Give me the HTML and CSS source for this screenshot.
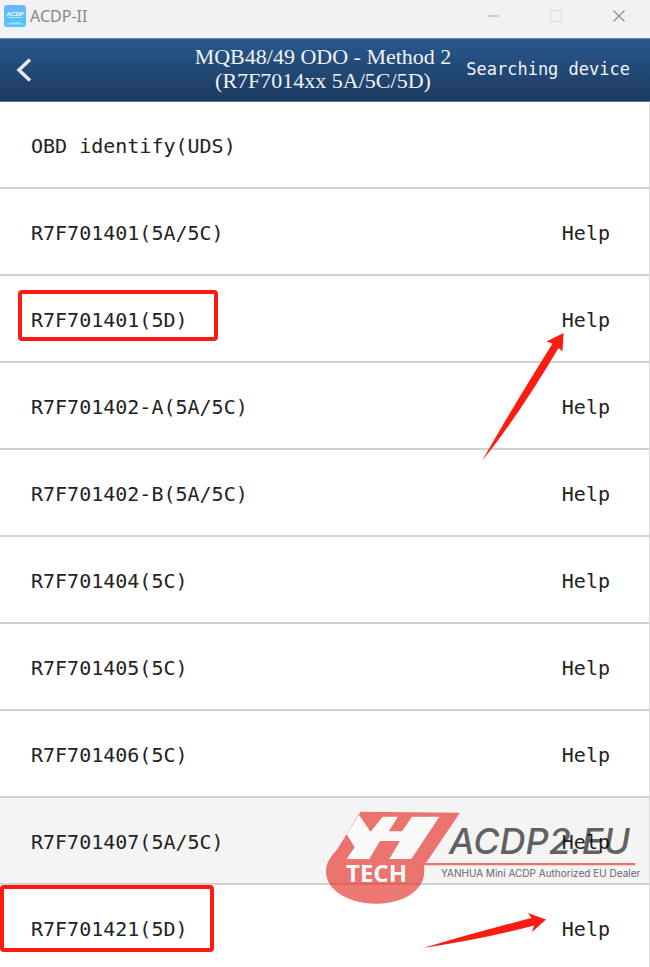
FILE: index.html
```html
<!DOCTYPE html>
<html lang="en">
<head>
    <meta charset="UTF-8">
    <meta name="viewport" content="width=device-width, initial-scale=1.0">
    <title>ACDP-II</title>
    <link rel="stylesheet" href="styles.css">
</head>
<body>
    <div class="titlebar">
      <svg class="app-icon" width="22" height="22" viewBox="0 0 22 22" aria-hidden="true">
        <defs>
          <linearGradient id="appBlue" x1="0" y1="0" x2="0" y2="1">
            <stop offset="0" stop-color="#6cb8fb"/>
            <stop offset="1" stop-color="#4cc6fb"/>
          </linearGradient>
        </defs>
        <rect width="22" height="22" rx="3" fill="url(#appBlue)"/>
        <text x="11" y="11" class="app-icon-text">ACDP</text>
        <path d="M4 12.5h14" stroke="#fff" stroke-width="0.7" opacity="0.8"/>
        <path d="M2 19.500q1-2 4-1.500q2-1.500 5-.5q4-1 5 .5q3-.5 4 1.500z" fill="#9fdcfd"/>
      </svg>
      <span class="app-name">ACDP-II</span>
      <div class="window-buttons">
        <button type="button" aria-label="Minimize">
          <svg width="14" height="14" viewBox="0 0 14 14"><path d="M1 7h12" stroke="#a8a8a8"/></svg>
        </button>
        <button type="button" aria-label="Maximize" disabled>
          <svg width="14" height="14" viewBox="0 0 14 14"><rect x="1.500" y="1.500" width="11" height="11" fill="none" stroke="#dcdcdc"/></svg>
        </button>
        <button type="button" aria-label="Close">
          <svg width="14" height="14" viewBox="0 0 14 14"><path d="M1.500 1.500l11 11M12.500 1.500l-11 11" stroke="#8c8c8c" stroke-width="1.200"/></svg>
        </button>
      </div>
    </div>

    <header class="header">
      <button type="button" class="back" aria-label="Back">
        <svg width="16" height="24" viewBox="0 0 16 24"><path d="M14 1.500L3 12l11 10.500" fill="none" stroke="#e6e8ec" stroke-width="3.500"/></svg>
      </button>
      <h1>MQB48/49 ODO - Method 2<br>(R7F7014xx 5A/5C/5D)</h1>
      <span class="status">Searching device</span>
    </header>

    <ul class="menu">
      <li><button type="button" class="item">OBD identify(UDS)</button></li>
      <li><button type="button" class="item">R7F701401(5A/5C)</button><a href="#" class="help">Help</a></li>
      <li>
        <button type="button" class="item">R7F701401(5D)</button><a href="#" class="help">Help</a>
        <span class="mark"></span>
        <svg class="arrow arrow-up" width="84" height="130" viewBox="0 0 84 130" aria-hidden="true">
          <path d="M82.500 1L65.500 9.500L71.500 11.500Q30 78 1 129Q38 83 77.500 16L81.500 19.500Z"/>
        </svg>
      </li>
      <li><button type="button" class="item">R7F701402-A(5A/5C)</button><a href="#" class="help">Help</a></li>
      <li><button type="button" class="item">R7F701402-B(5A/5C)</button><a href="#" class="help">Help</a></li>
      <li><button type="button" class="item">R7F701404(5C)</button><a href="#" class="help">Help</a></li>
      <li><button type="button" class="item">R7F701405(5C)</button><a href="#" class="help">Help</a></li>
      <li><button type="button" class="item">R7F701406(5C)</button><a href="#" class="help">Help</a></li>
      <li class="selected">
        <button type="button" class="item">R7F701407(5A/5C)</button><a href="#" class="help">Help</a>
        <svg class="brand" width="320" height="105" viewBox="0 0 320 105">
          <g transform="scale(0.3333)">
            <path class="brand-red" d="M122 20L420 23L318 174H946V181H311Q315 195 311 215C300 265 240 296 165 296C85 296 18 255 18 200C18 170 35 152 50 135L80 88L113 34Z"/>
            <path class="brand-white" d="M80 88L117 30L152 80L188 35H234L206 79H246L276 35H358L274 162H208L240 108H180L148 162H80L104 127Z"/>
          </g>
          <text x="26" y="77" class="brand-tech">TECH</text>
          <text x="129" y="49" class="brand-name">ACDP2.EU</text>
          <text x="121" y="72" class="brand-line">YANHUA Mini ACDP Authorized EU Dealer</text>
        </svg>
      </li>
      <li>
        <button type="button" class="item">R7F701421(5D)</button><a href="#" class="help">Help</a>
        <span class="mark mark-wide"></span>
        <svg class="arrow arrow-right" width="125" height="38" viewBox="0 0 125 38" aria-hidden="true">
          <path d="M124 7.500L106 1L109.500 6Q55 20 1 36Q62 27 112 13.500L110 20Z"/>
        </svg>
      </li>
    </ul>
</body>
</html>
```
FILE: styles.css
```css
* {
    box-sizing: border-box;
    margin: 0;
    padding: 0;
}

body {
    font-family: "DejaVu Sans Mono", monospace;
    background: #fff;
    color: #222;
    min-height: 100vh;
    overflow: hidden;
}

button {
    background: none;
    border: none;
    font: inherit;
    color: inherit;
    cursor: pointer;
}

/* window title bar */
.titlebar {
    display: flex;
    align-items: center;
    height: 38px;
    padding: 0 24px 6px 4px;
    background: #f2f2f2;
}

.app-icon-text {
    font: italic bold 6px "Liberation Sans", sans-serif;
    text-anchor: middle;
    fill: #fff;
}

.app-name {
    margin-left: 4px;
    font-family: "Noto Sans", sans-serif;
    font-size: 16px;
    color: #888;
}

.window-buttons {
    display: flex;
    gap: 49px;
    margin-left: auto;
}

.window-buttons button,
.window-buttons svg {
    display: block;
}

/* blue header */
.header {
    display: grid;
    grid-template-columns: 1fr auto 1fr;
    align-items: center;
    height: 64px;
    padding: 0 20px 0 16px;
    background: linear-gradient(#28588c, #1c3a60);
    border-top: 1px solid #6d87a3;
    border-bottom: 1px solid #5b7390;
    color: #f0f2f5;
}

.back {
    justify-self: start;
    height: 24px;
}

.header h1 {
    font-family: "Liberation Serif", serif;
    font-size: 22px;
    font-weight: normal;
    line-height: 24px;
    padding-bottom: 2px;
    text-align: center;
}

.status {
    justify-self: end;
    padding-bottom: 2px;
    font-size: 17px;
    white-space: nowrap;
}

/* list */
.menu {
    list-style: none;
    border-right: 1px solid #dcdcdc;
}

.menu li {
    position: relative;
    display: flex;
    align-items: center;
    justify-content: space-between;
    height: 87px;
    padding: 2px 39px 0 31px;
    border-bottom: 2px solid #d0d0d0;
    font-size: 20px;
}

.menu .selected {
    background: #f4f4f4;
}

.help {
    color: inherit;
    text-decoration: none;
}

/* red annotations */
.mark {
    position: absolute;
    left: 18px;
    top: 14px;
    width: 200px;
    height: 51px;
    border: 4px solid #fe1b12;
    border-radius: 4px;
    pointer-events: none;
}

.mark-wide {
    left: 0;
    top: 0;
    width: 214px;
    height: 67px;
}

.arrow {
    position: absolute;
    z-index: 1;
    fill: #fe1b12;
    pointer-events: none;
}

.arrow-up {
    right: 84px;
    top: 56px;
}

.arrow-right {
    right: 102px;
    top: 27px;
}

/* dealer logo over the list */
.brand {
    position: absolute;
    z-index: 2;
    right: 9px;
    top: 7px;
    opacity: 0.6;
    pointer-events: none;
}

.brand-red {
    fill: #e41f15;
}

.brand-white {
    fill: #fff;
}

.brand-tech {
    font: bold 24px "Open Sans", sans-serif;
    fill: #fff;
}

.brand-name {
    font: italic 500 36px Inter, sans-serif;
    fill: #000;
}

.brand-line {
    font: 10px Inter, sans-serif;
    fill: #000;
}
```
